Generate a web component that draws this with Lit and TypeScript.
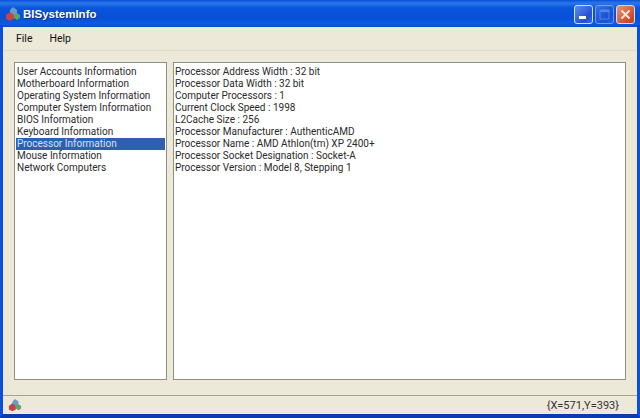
import { LitElement, html, css } from "lit";
import { customElement } from "lit/decorators.js";

const LEFT = ["User Accounts Information","Motherboard Information","Operating System Information","Computer System Information","BIOS Information","Keyboard Information","Processor Information","Mouse Information","Network Computers"];
const RIGHT = ["Processor Address Width : 32 bit","Processor Data Width : 32 bit","Computer Processors : 1","Current Clock Speed : 1998","L2Cache Size : 256","Processor Manufacturer : AuthenticAMD","Processor Name : AMD Athlon(tm) XP 2400+","Processor Socket Designation : Socket-A","Processor Version : Model 8, Stepping 1"];

const logo = (s: number) => html`<svg width=${s} height=${s} viewBox="0 0 16 16"><path d="M8 1l4 3v4l-4 2-3-2V4z" fill="#6a9cc8"/><path d="M1 9l4-3 4 3v4l-4 2-4-2z" fill="#c8424a"/><path d="M9 9l3-2 3 2v3l-3 2-3-2z" fill="#5aa85a"/></svg>`;

@customElement("app-root")
export class AppRoot extends LitElement {
  static styles = css`
    :host { display: block; width: 640px; height: 418px; overflow: hidden; font-family: Roboto, "Liberation Sans", sans-serif; font-size: 10px; color: #2a2a2a; }
    .win { height: 418px; box-sizing: border-box; display: flex; flex-direction: column; background: #0a4bd6; border-left: 3px solid #0a50dc; border-right: 3px solid #0a50dc; border-bottom: 4px solid #0a3cb0; }
    .title { height: 27px; margin: 0 -3px; flex: none; display: flex; align-items: center; padding: 0 5px 0 5px; gap: 2px; background: linear-gradient(#0a50d8 0, #2a78ea 3px, #0a55dc 8px, #0650d6 18px, #0a5ce4 24px, #0a48c8 27px); color: #fff; font-weight: bold; font-family: "Liberation Sans", sans-serif; font-size: 11.5px; text-shadow: 1px 1px 0 #0a2f90; }
    .title span { flex: 1; }
    .btns { display: flex; gap: 2px; margin-top: 2px; }
    .b { width: 19px; height: 19px; box-sizing: border-box; border: 1px solid #cfdcf8; border-radius: 3px; background: linear-gradient(135deg, #5f8cec, #2350d0 70%, #3a68e0); display: flex; align-items: center; justify-content: center; }
    .b.dis { opacity: .5; }
    .b.x { background: linear-gradient(135deg, #e8947a, #d0502c 70%, #c04020); }
    .menu { height: 23px; flex: none; background: #ece9d8; display: flex; align-items: center; padding-left: 13px; gap: 17px; font-size: 10.5px; color: #111; border-bottom: 1px solid #dedbc9; }
    .body { flex: 1; min-height: 0; background: #ece9d8; display: flex; gap: 6px; padding: 11px 11px 15px 11px; }
    .pane { background: #fff; border: 1px solid #8f8f86; padding: 3px 1px; box-sizing: border-box; line-height: 12px; white-space: nowrap; }
    .left { width: 153px; flex: none; }
    .left div { padding-left: 1px; }
    .right { flex: 1; }
    .pane div { height: 12px; }
    .sel { background: #2f5fb0; color: #d6e0f2; }
    .status { height: 18px; flex: none; background: #ece9d8; border-top: 1px solid #a8a598; display: flex; align-items: center; justify-content: space-between; padding: 0 18px 0 5px; font-size: 11px; color: #333; }
  `;
  render() {
    return html`<div class="win">
      <div class="title">${logo(16)}<span>BISystemInfo</span>
        <div class="btns">
          <div class="b"><svg width="9" height="9" viewBox="0 0 9 9"><rect x="0" y="6" width="7" height="3" fill="#fff"/></svg></div>
          <div class="b dis"><svg width="11" height="11" viewBox="0 0 11 11"><rect x="1" y="1" width="9" height="9" fill="none" stroke="#9db8ee" stroke-width="1"/><rect x="1" y="1" width="9" height="2" fill="#9db8ee"/></svg></div>
          <div class="b x"><svg width="11" height="11" viewBox="0 0 11 11"><path d="M1.5 1.5L9.5 9.5M9.5 1.5L1.5 9.5" stroke="#fbe6da" stroke-width="2"/></svg></div>
        </div>
      </div>
      <div class="menu"><span>File</span><span>Help</span></div>
      <div class="body">
        <div class="pane left">${LEFT.map(t => html`<div class=${t.startsWith("Processor") ? "sel" : ""}>${t}</div>`)}</div>
        <div class="pane right">${RIGHT.map(t => html`<div>${t}</div>`)}</div>
      </div>
      <div class="status">${logo(14)}<span>{X=571,Y=393}</span></div>
    </div>`;
  }
}
